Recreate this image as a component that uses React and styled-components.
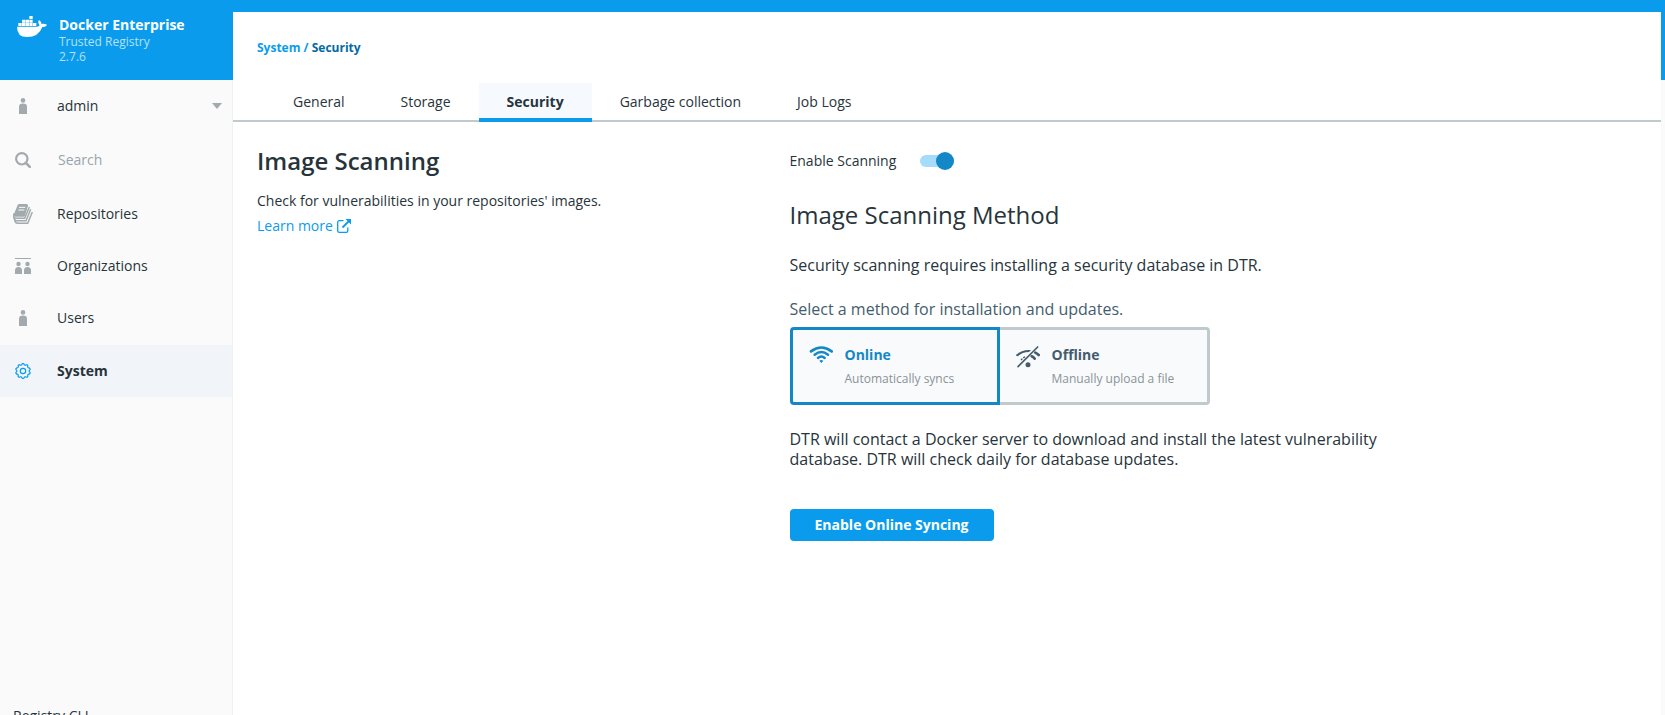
import React, { useState } from "react";
import styled, { createGlobalStyle, css } from "styled-components";

const c = {
  blue: "#0a9bed",
  deepBlue: "#1488c6",
  darkLink: "#046aa3",
  ink: "#27343b",
  slate: "#445d6e",
  icon: "#a3aaad",
  line: "#c0c9cc",
  panel: "#fafafa",
};

const GlobalStyle = createGlobalStyle`
  *, *::before, *::after { box-sizing: border-box; }
  body {
    margin: 0;
    color: ${c.ink};
    font: 14px/20px "Open Sans", sans-serif;
  }
  h1, h2, p, ul { margin: 0; padding: 0; }
  ul { list-style: none; }
  a { text-decoration: none; }
  button, input { font: inherit; }
`;

const Shell = styled.div`
  display: flex;
  height: 100vh;
  overflow: hidden;
  padding-right: 4px;
  background: linear-gradient(${c.blue} 80px, ${c.panel} 80px);
`;

const Sidebar = styled.aside`
  flex: 0 0 233px;
  min-width: 0;
  height: calc(100vh + 12px);
  display: flex;
  flex-direction: column;
`;

const Brand = styled.header`
  display: flex;
  flex: none;
  gap: 12px;
  height: 80px;
  padding: 16px 16px 0;
  color: #fff;
`;

const BrandText = styled.div`
  font-size: 12px;
  line-height: 15px;
  color: #b5e1fb;
`;

const BrandName = styled.div`
  font-size: 14px;
  line-height: 18px;
  font-weight: 700;
  color: #fff;
`;

const SideBody = styled.div`
  display: flex;
  flex: 1;
  flex-direction: column;
  border-right: 1px solid #f0f1f2;
`;

const rowStyle = css`
  display: flex;
  align-items: center;
  gap: 22px;
  width: 100%;
  height: 52px;
  padding: 0 10px 0 11px;
  border: 0;
  color: ${c.ink};
  background: none;
  text-align: left;
`;

const AccountButton = styled.button`
  ${rowStyle}
  cursor: pointer;
`;

const AccountName = styled.span`
  flex: 1;
`;

const SearchRow = styled.label`
  ${rowStyle}
  height: 57px;
  padding-bottom: 2px;
`;

const SearchInput = styled.input`
  flex: 1;
  width: 100%;
  min-width: 0;
  padding: 0 1px;
  border: 0;
  outline: 0;
  background: none;
  color: ${c.ink};
  &::placeholder { color: #98a5ac; opacity: 1; }
`;

const NavLink = styled.a`
  ${rowStyle}
  padding-bottom: ${(p) => (p.$active ? 0 : "2px")};
  font-weight: ${(p) => (p.$active ? 700 : 400)};
  background: ${(p) => (p.$active ? "#f1f5fa" : "none")};
`;

const IconSlot = styled.span`
  display: flex;
  flex: 0 0 24px;
  justify-content: center;
  color: ${(p) => (p.$active ? c.blue : c.icon)};
`;

const FooterLink = styled.a`
  margin-top: auto;
  padding: 0 13px;
  line-height: 22px;
  color: ${c.ink};
`;

const Main = styled.main`
  flex: 1;
  min-width: 0;
  margin-top: 12px;
  background: #fff;
`;

const Breadcrumb = styled.nav`
  padding: 26px 24px 25px;
  font-size: 12px;
  font-weight: 700;
  color: ${c.blue};
`;

const Crumb = styled.a`
  color: ${(p) => (p.$current ? c.darkLink : c.blue)};
`;

const Tabs = styled.nav`
  display: flex;
  padding: 0 32px;
  box-shadow: inset 0 -2px ${c.line};
`;

const Tab = styled.a`
  height: 39px;
  padding: 9px 28px 0;
  color: ${c.ink};
  font-weight: ${(p) => (p.$active ? 700 : 400)};
  border-bottom: 4px solid ${(p) => (p.$active ? c.blue : "transparent")};
  background: ${(p) => (p.$active ? "#f6faff" : "none")};
`;

const Content = styled.div`
  display: grid;
  grid-template-columns: 3fr 5fr;
  column-gap: 24px;
  padding: 24px;
`;

const Title = styled.h1`
  margin-bottom: 15px;
  font-size: 24px;
  line-height: 30px;
  font-weight: 600;
`;

const LearnMore = styled.a`
  display: inline-flex;
  align-items: center;
  gap: 4px;
  margin-top: 5px;
  color: ${c.blue};
`;

const ToggleRow = styled.label`
  display: flex;
  align-items: center;
  gap: 24px;
  height: 30px;
`;

const Toggle = styled.input`
  appearance: none;
  display: flex;
  align-items: center;
  width: 34px;
  height: 12px;
  margin: 0;
  border-radius: 6px;
  background: ${(p) => (p.checked ? "#a5dcfb" : c.line)};
  justify-content: ${(p) => (p.checked ? "flex-end" : "flex-start")};
  cursor: pointer;
  &::before {
    content: "";
    flex: none;
    width: 18px;
    height: 18px;
    border-radius: 50%;
    background: ${(p) => (p.checked ? c.deepBlue : c.icon)};
  }
`;

const Subtitle = styled.h2`
  margin: 24px 0 25px;
  font-size: 24px;
  line-height: 30px;
  font-weight: 400;
`;

const Text = styled.p`
  max-width: 600px;
  font-size: 16px;
  line-height: 20px;
`;

const MethodGroup = styled.fieldset`
  display: flex;
  flex-wrap: wrap;
  margin: 24px 0;
  padding: 0;
  border: 0;
`;

const Legend = styled.legend`
  margin-bottom: 8px;
  padding: 0;
  font-size: 16px;
  line-height: 20px;
  color: ${c.slate};
`;

const MethodCard = styled.label`
  display: flex;
  gap: 12px;
  width: 210px;
  height: 78px;
  padding: 15px 16px;
  border: 3px solid ${(p) => (p.$active ? c.deepBlue : c.line)};
  border-radius: ${(p) => (p.$side === "left" ? "4px 0 0 4px" : "0 4px 4px 0")};
  ${(p) => !p.$active && (p.$side === "left" ? "border-right: 0;" : "border-left: 0;")}
  background: #f9fafc;
  color: ${(p) => (p.$active ? c.deepBlue : c.slate)};
  cursor: pointer;
`;

const HiddenRadio = styled.input`
  position: absolute;
  opacity: 0;
  width: 1px;
  height: 1px;
  margin: 0;
`;

const MethodName = styled.span`
  display: block;
  margin-bottom: 4px;
  font-weight: 700;
`;

const MethodHint = styled.span`
  display: block;
  font-size: 12px;
  color: #8a9397;
`;

const PrimaryButton = styled.button`
  height: 32px;
  margin-top: 40px;
  padding: 0 25px;
  border: 0;
  border-radius: 4px;
  background: ${c.blue};
  color: #fff;
  font-weight: 700;
  cursor: pointer;
`;

const WhaleIcon = () => (
  <svg width="31" height="22" viewBox="0 0 93 66" fill="#fff" aria-hidden="true">
    <path d="M40 0h10v9H40zM18 11h10v9H18zM29 11h10v9H29zM40 11h10v9H40zM7 21h10v9H7zM18 21h10v9H18zM29 21h10v9H29zM40 21h10v9H40zM51 21h10v9H51z" />
    <path d="M3 32H62Q69 32 71 28Q64 20 69 12Q76 17 77 24Q84 22 93 26Q90 33 79 33Q68 63 33 63Q3 63 3 32Z" />
  </svg>
);

const PersonIcon = () => (
  <svg width="8" height="16" viewBox="0 0 8 16" fill="currentColor" aria-hidden="true">
    <circle cx="4" cy="2.4" r="2.3" />
    <path d="M0 16V8.500Q0 5.500 4 5.500Q8 5.500 8 8.500V16Z" />
  </svg>
);

const SearchIcon = () => (
  <svg width="16" height="16" viewBox="0 0 16 16" fill="none" stroke="currentColor" aria-hidden="true">
    <circle cx="6.800" cy="6.800" r="5.700" strokeWidth="2.200" />
    <path d="M11 11L14.800 14.800" strokeWidth="2.500" strokeLinecap="round" />
  </svg>
);

const BooksIcon = () => (
  <svg width="20" height="20" viewBox="0 0 60 60" aria-hidden="true">
    <path d="M14 3Q15 0 19 0H40Q46 0 45 5L36 35Q35 38 31 38H6Q0 38 2 32Z" fill="currentColor" />
    <path d="M18 10H37M16 18H34" stroke="#fafafa" strokeWidth="3" />
    <g fill="none" stroke="currentColor" strokeWidth="4.500">
      <path d="M3 28Q-1 43 8 43H35L49 9" />
      <path d="M3 38Q3 50 11 50.500H39L53 16" />
      <path d="M5 46Q6 58 15 58H44L58 24" />
    </g>
  </svg>
);

const OrgIcon = () => (
  <svg width="16" height="16" viewBox="0 0 16 16" fill="currentColor" aria-hidden="true">
    <path d="M0 0H16V1H0Z" />
    <circle cx="3.500" cy="6" r="2.200" />
    <circle cx="12.500" cy="6" r="2.200" />
    <path d="M0 16V12.500Q0 9 3.500 9Q7 9 7 12.500V16ZM9 16V12.500Q9 9 12.500 9Q16 9 16 12.500V16Z" />
  </svg>
);

const gearPath =
  Array.from({ length: 120 }, (_, i) => {
    const a = (i / 120) * Math.PI * 2;
    const r = 6.8 + 0.6 * Math.tanh(2 * Math.cos(a * 10));
    const x = (8 + r * Math.sin(a)).toFixed(2);
    const y = (8 - r * Math.cos(a)).toFixed(2);
    return `${i ? "L" : "M"}${x} ${y}`;
  }).join("") + "Z";

const GearIcon = () => (
  <svg width="16" height="16" viewBox="0 0 16 16" fill="none" stroke="currentColor" strokeWidth="1.200" aria-hidden="true">
    <path d={gearPath} strokeLinejoin="round" />
    <circle cx="8" cy="8" r="2.700" />
  </svg>
);

const CaretIcon = () => (
  <svg width="10" height="6" viewBox="0 0 10 6" fill={c.icon} aria-hidden="true">
    <path d="M0 0H10L5 6Z" />
  </svg>
);

const ExternalIcon = () => (
  <svg width="14" height="14" viewBox="0 0 14 14" fill="none" stroke="currentColor" strokeWidth="1.300" aria-hidden="true">
    <path d="M6.500 1.700H2.300Q.7 1.700 .7 3.300V11.700Q.7 13.300 2.300 13.300H9.200Q10.800 13.300 10.800 11.700V8.500" />
    <path d="M5.500 8.500L12 2" strokeWidth="1.800" />
    <path d="M8.500 0H14V5.500Z" fill="currentColor" stroke="none" />
  </svg>
);

const WifiIcon = () => (
  <svg width="24" height="18" viewBox="84 75 72 54" fill="none" stroke="currentColor" strokeLinecap="round" aria-hidden="true">
    <path d="M90 94Q121 71 152 94" strokeWidth="8" />
    <path d="M101 104Q121 88 141 104" strokeWidth="7.500" />
    <path d="M111 114Q121 105 131 114" strokeWidth="7.500" />
    <path d="M115 122Q121 118 127 122L121 129Z" fill="currentColor" stroke="none" />
  </svg>
);

const WifiOffIcon = () => (
  <svg width="24" height="24" viewBox="705 75 72 72" fill="none" stroke="currentColor" strokeLinecap="round" aria-hidden="true">
    <path d="M705 105Q723 88 750 90L744 96Q724 96 710 109Q706 109 705 105Z" fill="currentColor" stroke="none" />
    <path d="M763 98Q769 101 773 105" strokeWidth="8" />
    <path d="M752 109Q757 111 761 116" strokeWidth="8" />
    <path d="M721 119L723 117M728 113L731 111" strokeWidth="4" />
    <path d="M711 140L770 81" strokeWidth="5" />
    <circle cx="741" cy="134" r="7.500" fill="currentColor" stroke="none" />
  </svg>
);

const navItems = [
  { label: "Repositories", Icon: BooksIcon },
  { label: "Organizations", Icon: OrgIcon },
  { label: "Users", Icon: PersonIcon },
  { label: "System", Icon: GearIcon, active: true },
];

const tabs = ["General", "Storage", "Security", "Garbage collection", "Job Logs"];

const methods = [
  { id: "online", name: "Online", hint: "Automatically syncs", Icon: WifiIcon, side: "left" },
  { id: "offline", name: "Offline", hint: "Manually upload a file", Icon: WifiOffIcon, side: "right" },
];

export default function App() {
  const [scanning, setScanning] = useState(true);
  const [method, setMethod] = useState("online");

  return (
    <Shell>
      <GlobalStyle />
      <Sidebar>
        <Brand>
          <WhaleIcon />
          <BrandText>
            <BrandName>Docker Enterprise</BrandName>
            <div>Trusted Registry</div>
            <div>2.7.6</div>
          </BrandText>
        </Brand>
        <SideBody>
          <AccountButton type="button">
            <IconSlot><PersonIcon /></IconSlot>
            <AccountName>admin</AccountName>
            <CaretIcon />
          </AccountButton>
          <SearchRow>
            <IconSlot><SearchIcon /></IconSlot>
            <SearchInput type="text" placeholder="Search" aria-label="Search" />
          </SearchRow>
          <nav aria-label="Registry">
            {navItems.map(({ label, Icon, active }) => (
              <NavLink key={label} href="#" $active={active}>
                <IconSlot $active={active}><Icon /></IconSlot>
                {label}
              </NavLink>
            ))}
          </nav>
          <FooterLink href="#">Registry CLI</FooterLink>
        </SideBody>
      </Sidebar>

      <Main>
        <Breadcrumb aria-label="Breadcrumb">
          <Crumb href="#">System</Crumb> / <Crumb href="#" $current>Security</Crumb>
        </Breadcrumb>
        <Tabs aria-label="System settings">
          {tabs.map((tab) => (
            <Tab key={tab} href="#" $active={tab === "Security"}>{tab}</Tab>
          ))}
        </Tabs>
        <Content>
          <section>
            <Title>Image Scanning</Title>
            <p>Check for vulnerabilities in your repositories' images.</p>
            <LearnMore href="#">Learn more <ExternalIcon /></LearnMore>
          </section>
          <section>
            <ToggleRow>
              Enable Scanning
              <Toggle
                type="checkbox"
                checked={scanning}
                onChange={(e) => setScanning(e.target.checked)}
              />
            </ToggleRow>
            <Subtitle>Image Scanning Method</Subtitle>
            <Text>Security scanning requires installing a security database in DTR.</Text>
            <MethodGroup>
              <Legend>Select a method for installation and updates.</Legend>
              {methods.map(({ id, name, hint, Icon, side }) => (
                <MethodCard key={id} $active={method === id} $side={side}>
                  <HiddenRadio
                    type="radio"
                    name="method"
                    checked={method === id}
                    onChange={() => setMethod(id)}
                  />
                  <Icon />
                  <span>
                    <MethodName>{name}</MethodName>
                    <MethodHint>{hint}</MethodHint>
                  </span>
                </MethodCard>
              ))}
            </MethodGroup>
            <Text>
              DTR will contact a Docker server to download and install the latest vulnerability
              database. DTR will check daily for database updates.
            </Text>
            <PrimaryButton type="button">Enable Online Syncing</PrimaryButton>
          </section>
        </Content>
      </Main>
    </Shell>
  );
}
